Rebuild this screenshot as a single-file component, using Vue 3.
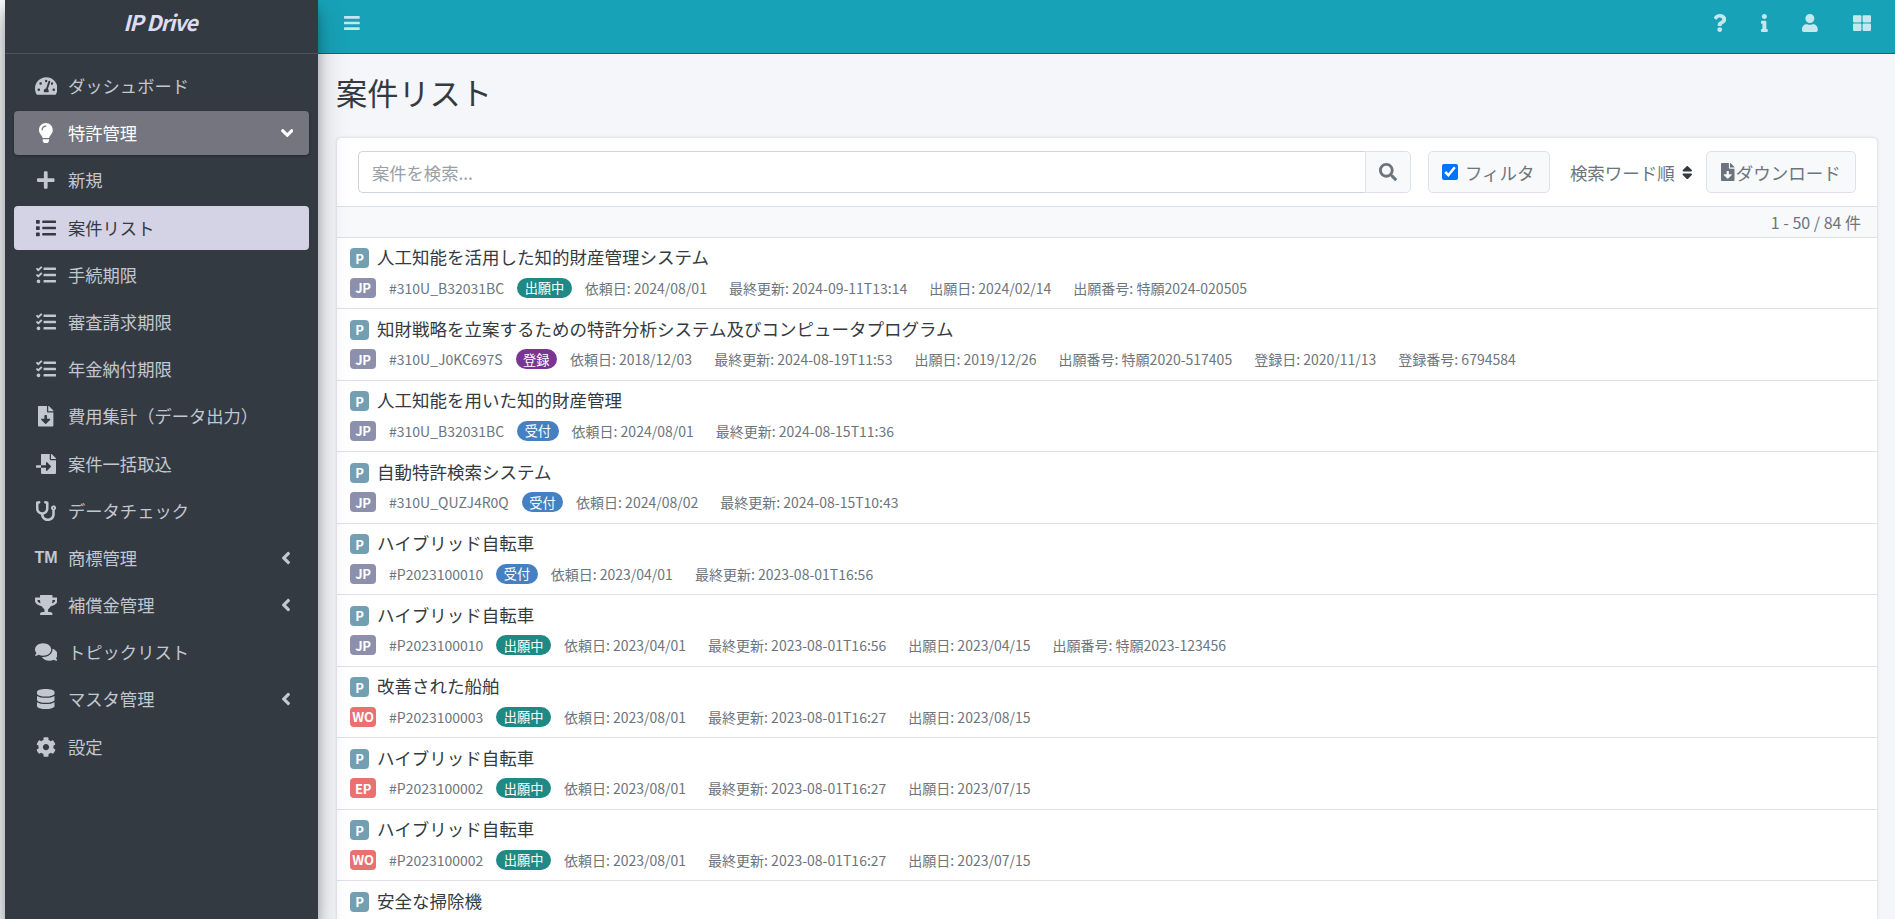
<template>
  <div class="layout">
    <aside class="sidebar">
      <div class="brand">IP Drive</div>
      <nav class="menu">
        <a v-for="item in menuItems" :key="item.label" class="menu-item" :class="item.state">
          <span class="menu-icon">
            <span v-if="item.icon === 'tm'" class="tm">TM</span>
            <svg v-else :viewBox="`0 0 ${icons[item.icon].w} 512`" :style="{ height: (item.size || 20) + 'px' }">
              <path fill="currentColor" :d="icons[item.icon].d" />
            </svg>
          </span>
          <span class="menu-label">{{ item.label }}</span>
          <svg v-if="item.arrow" class="menu-arrow" :class="item.arrow" :viewBox="`0 0 ${icons[item.arrow].w} 512`">
            <path fill="currentColor" :d="icons[item.arrow].d" />
          </svg>
        </a>
      </nav>
    </aside>

    <div class="content-wrap">
      <header class="topbar">
        <a class="nav-link menu-toggle">
          <svg :viewBox="`0 0 ${icons.bars.w} 512`"><path fill="currentColor" :d="icons.bars.d" /></svg>
        </a>
        <div class="nav-right">
          <a v-for="name in topIcons" :key="name" class="nav-link">
            <svg :viewBox="`0 0 ${icons[name].w} 512`"><path fill="currentColor" :d="icons[name].d" /></svg>
          </a>
        </div>
      </header>

      <main class="main">
        <h1 class="page-title">案件リスト</h1>

        <section class="card">
          <div class="toolbar">
            <div class="search-group">
              <input class="search-input" type="text" placeholder="案件を検索..." />
              <button class="search-button">
                <svg viewBox="0 0 512 512"><path fill="currentColor" :d="icons.search.d" /></svg>
              </button>
            </div>
            <label class="filter-button">
              <input type="checkbox" checked />
              <span>フィルタ</span>
            </label>
            <div class="sort-label">
              検索ワード順
              <svg viewBox="0 0 320 512"><path fill="currentColor" :d="icons.sort.d" /></svg>
            </div>
            <button class="download-button">
              <svg viewBox="0 0 384 512"><path fill="currentColor" :d="icons.fileDownload.d" /></svg>
              ダウンロード
            </button>
          </div>

          <div class="count-line">1 - 50 / 84 件</div>

          <ul class="case-list">
            <li v-for="(row, index) in rows" :key="index" class="case-row">
              <div class="case-title">
                <span class="badge-p">P</span>
                <span>{{ row.title }}</span>
              </div>
              <div v-if="row.id" class="case-meta">
                <span class="badge-country" :class="row.country === 'JP' ? 'jp' : 'foreign'">{{ row.country }}</span>
                <span class="case-id">{{ row.id }}</span>
                <span class="pill" :class="statusClass[row.status]">{{ row.status }}</span>
                <span v-for="field in row.fields" :key="field" class="meta-field">{{ field }}</span>
              </div>
            </li>
          </ul>
        </section>
      </main>
    </div>
  </div>
</template>

<script setup>
const icons = {
  bars: { w: 448, d: 'M16 132h416c8.837 0 16-7.163 16-16V76c0-8.837-7.163-16-16-16H16C7.163 60 0 67.163 0 76v40c0 8.837 7.163 16 16 16zm0 160h416c8.837 0 16-7.163 16-16v-40c0-8.837-7.163-16-16-16H16c-8.837 0-16 7.163-16 16v40c0 8.837 7.163 16 16 16zm0 160h416c8.837 0 16-7.163 16-16v-40c0-8.837-7.163-16-16-16H16c-8.837 0-16 7.163-16 16v40c0 8.837 7.163 16 16 16z' },
  search: { w: 512, d: 'M505 442.7L405.3 343c-4.5-4.5-10.6-7-17-7H372c27.6-35.3 44-79.7 44-128C416 93.1 322.9 0 208 0S0 93.1 0 208s93.1 208 208 208c48.3 0 92.7-16.4 128-44v16.3c0 6.4 2.5 12.5 7 17l99.7 99.7c9.4 9.4 24.6 9.4 33.9 0l28.3-28.3c9.4-9.4 9.4-24.6.1-34zM208 336c-70.7 0-128-57.2-128-128 0-70.7 57.2-128 128-128 70.7 0 128 57.2 128 128 0 70.7-57.2 128-128 128z' },
  plus: { w: 448, d: 'M416 208H272V64c0-17.67-14.33-32-32-32h-32c-17.67 0-32 14.33-32 32v144H32c-17.67 0-32 14.33-32 32v32c0 17.67 14.33 32 32 32h144v144c0 17.67 14.33 32 32 32h32c17.67 0 32-14.33 32-32V304h144c17.67 0 32-14.33 32-32v-32c0-17.67-14.33-32-32-32z' },
  angleDown: { w: 320, d: 'M143 352.3L7 216.3c-9.4-9.4-9.4-24.6 0-33.9l22.6-22.6c9.4-9.4 24.6-9.4 33.9 0l96.4 96.4 96.4-96.4c9.4-9.4 24.6-9.4 33.9 0l22.6 22.6c9.4 9.4 9.4 24.6 0 33.9l-136 136c-9.2 9.4-24.4 9.4-33.8 0z' },
  angleLeft: { w: 256, d: 'M31.7 239l136-136c9.4-9.4 24.6-9.4 33.9 0l22.6 22.6c9.4 9.4 9.4 24.6 0 33.9L127.9 256l96.4 96.4c9.4 9.4 9.4 24.6 0 33.9L201.7 409c-9.4 9.4-24.6 9.4-33.9 0l-136-136c-9.5-9.4-9.5-24.6-.1-34z' },
  lightbulb: { w: 352, d: 'M96.06 454.35c.01 6.29 1.87 12.45 5.36 17.69l17.09 25.69a31.99 31.99 0 0 0 26.64 14.28h61.71a31.99 31.99 0 0 0 26.64-14.28l17.09-25.69a31.989 31.989 0 0 0 5.36-17.69l.04-38.35H96.01l.05 38.35zM0 176c0 44.37 16.45 84.85 43.56 115.78 16.52 18.85 42.36 58.23 52.21 91.45.04.26.07.52.11.78h160.24c.04-.26.07-.51.11-.78 9.85-33.22 35.69-72.6 52.21-91.45C335.55 260.85 352 220.37 352 176 352 78.61 272.91-.3 175.45 0 73.44.31 0 82.97 0 176zm176-80c-44.11 0-80 35.89-80 80 0 8.84-7.16 16-16 16s-16-7.16-16-16c0-61.76 50.24-112 112-112 8.84 0 16 7.16 16 16s-7.16 16-16 16z' },
  tachometer: { w: 576, d: 'M288 32C128.94 32 0 160.94 0 320c0 52.8 14.25 102.26 39.06 144.8 5.61 9.62 16.3 15.2 27.44 15.2h443c11.14 0 21.83-5.58 27.44-15.2C561.75 422.26 576 372.8 576 320c0-159.06-128.94-288-288-288zm0 64c14.71 0 26.58 10.13 30.32 23.65-1.11 2.26-2.64 4.23-3.45 6.67l-9.22 27.67c-5.13 3.49-10.97 6.01-17.64 6.01-17.67 0-32-14.33-32-32S270.33 96 288 96zM96 384c-17.67 0-32-14.33-32-32s14.33-32 32-32 32 14.33 32 32-14.33 32-32 32zm48-160c-17.67 0-32-14.33-32-32s14.33-32 32-32 32 14.33 32 32-14.33 32-32 32zm246.77-72.41l-61.33 184C343.13 347.33 352 364.54 352 384c0 11.72-3.38 22.55-8.88 32H232.88c-5.5-9.45-8.88-20.28-8.88-32 0-33.94 26.5-61.43 59.9-63.59l61.34-184.01c4.17-12.56 17.73-19.45 30.36-15.17 12.57 4.19 19.35 17.79 15.17 30.36zm14.66 57.2l15.52-46.55c3.47-1.29 7.13-2.23 11.05-2.23 17.67 0 32 14.33 32 32s-14.33 32-32 32c-11.38-.01-20.89-6.28-26.57-15.22zM480 384c-17.67 0-32-14.33-32-32s14.33-32 32-32 32 14.33 32 32-14.33 32-32 32z' },
  list: { w: 512, d: 'M80 368H16a16 16 0 0 0-16 16v64a16 16 0 0 0 16 16h64a16 16 0 0 0 16-16v-64a16 16 0 0 0-16-16zm0-320H16A16 16 0 0 0 0 64v64a16 16 0 0 0 16 16h64a16 16 0 0 0 16-16V64a16 16 0 0 0-16-16zm0 160H16a16 16 0 0 0-16 16v64a16 16 0 0 0 16 16h64a16 16 0 0 0 16-16v-64a16 16 0 0 0-16-16zm416 176H176a16 16 0 0 0-16 16v32a16 16 0 0 0 16 16h320a16 16 0 0 0 16-16v-32a16 16 0 0 0-16-16zm0-320H176a16 16 0 0 0-16 16v32a16 16 0 0 0 16 16h320a16 16 0 0 0 16-16V80a16 16 0 0 0-16-16zm0 160H176a16 16 0 0 0-16 16v32a16 16 0 0 0 16 16h320a16 16 0 0 0 16-16v-32a16 16 0 0 0-16-16z' },
  tasks: { w: 512, d: 'M139.61 35.5a12 12 0 0 0-17 0L58.93 98.81l-22.7-22.12a12 12 0 0 0-17 0L3.53 92.41a12 12 0 0 0 0 17l47.59 47.4a12.78 12.78 0 0 0 17.61 0l15.59-15.62L156.52 69a12.09 12.09 0 0 0 .09-17zm0 159.19a12 12 0 0 0-17 0l-63.68 63.72-22.7-22.1a12 12 0 0 0-17 0L3.53 252a12 12 0 0 0 0 17L51 316.5a12.77 12.77 0 0 0 17.6 0l15.7-15.69 72.2-72.22a12 12 0 0 0 .09-16.9zM64 368c-26.49 0-48.59 21.5-48.59 48S37.53 464 64 464a48 48 0 0 0 0-96zm432 16H208a16 16 0 0 0-16 16v32a16 16 0 0 0 16 16h288a16 16 0 0 0 16-16v-32a16 16 0 0 0-16-16zm0-320H208a16 16 0 0 0-16 16v32a16 16 0 0 0 16 16h288a16 16 0 0 0 16-16V80a16 16 0 0 0-16-16zm0 160H208a16 16 0 0 0-16 16v32a16 16 0 0 0 16 16h288a16 16 0 0 0 16-16v-32a16 16 0 0 0-16-16z' },
  fileDownload: { w: 384, d: 'M224 136V0H24C10.7 0 0 10.7 0 24v464c0 13.3 10.7 24 24 24h336c13.3 0 24-10.7 24-24V160H248c-13.2 0-24-10.8-24-24zm76.45 211.36l-96.42 95.7c-6.65 6.61-17.39 6.61-24.04 0l-96.42-95.7C73.42 337.29 80.54 320 94.82 320H160v-80c0-8.84 7.16-16 16-16h32c8.84 0 16 7.16 16 16v80h65.18c14.28 0 21.4 17.29 11.27 27.36zM377 105L279.1 7c-4.5-4.5-10.6-7-17-7H256v128h128v-6.1c0-6.3-2.5-12.4-7-16.9z' },
  fileImport: { w: 512, d: 'M16 288c-8.8 0-16 7.2-16 16v32c0 8.8 7.2 16 16 16h112v-64zm489-183L407.1 7c-4.5-4.5-10.6-7-17-7H384v128h128v-6.1c0-6.3-2.5-12.4-7-16.9zm-153 31V0H152c-13.3 0-24 10.7-24 24v264h128v-65.2c0-14.3 17.3-21.4 27.4-11.3L379 308c6.6 6.7 6.6 17.4 0 24l-95.7 96.4c-10.1 10.1-27.4 3-27.4-11.3V352H128v136c0 13.3 10.7 24 24 24h336c13.3 0 24-10.7 24-24V160H376c-13.2 0-24-10.8-24-24z' },
  stethoscope: { w: 512, d: 'M447.1 112c-34.2.5-62.3 28.4-63 62.6-.5 24.3 12.5 45.6 32 56.8V344c0 57.3-50.2 104-112 104-60 0-109.2-44.1-111.9-99.2C265 333.8 320 269.2 320 192V36.6c0-11.4-8.1-21.3-19.3-23.5L237.8.5c-13-2.6-25.6 5.8-28.2 18.8L206.4 35c-2.6 13 5.8 25.6 18.8 28.2l30.7 6.1v121.4c0 52.9-42.2 96.7-95.1 97.2-53.4.5-96.9-42.7-96.9-96V69.4l30.7-6.1c13-2.6 21.4-15.2 18.8-28.2l-3.1-15.7C107.7 6.4 95.1-2 82.1.6L19.3 13C8.1 15.3 0 25.1 0 36.6V192c0 77.3 55.1 142 128.1 156.8C130.7 439.2 208.6 512 304 512c97 0 176-75.4 176-168V231.4c19.1-11.1 32-31.7 32-55.4 0-35.7-29.2-64.5-64.9-64zm.9 80c-8.8 0-16-7.2-16-16s7.2-16 16-16 16 7.2 16 16-7.2 16-16 16z' },
  trophy: { w: 576, d: 'M552 64H448V24c0-13.3-10.7-24-24-24H152c-13.3 0-24 10.7-24 24v40H24C10.7 64 0 74.7 0 88v56c0 35.7 22.5 72.4 61.9 100.7 31.5 22.7 69.8 37.1 110 41.7C203.3 338.5 240 360 240 360v72h-48c-35.3 0-64 20.7-64 56v12c0 6.6 5.4 12 12 12h296c6.6 0 12-5.4 12-12v-12c0-35.3-28.7-56-64-56h-48v-72s36.7-21.5 68.1-73.6c40.3-4.6 78.6-19 110-41.7 39.3-28.3 61.9-65 61.9-100.7V88c0-13.3-10.7-24-24-24zM99.3 192.8C74.9 175.2 64 155.6 64 144v-16h64.2c1 32.6 5.8 61.2 12.8 86.2-15.1-5.2-29.2-12.4-41.7-21.4zM512 144c0 16.1-17.7 36.1-35.3 48.8-12.5 9-26.7 16.2-41.8 21.4 7-25 11.8-53.6 12.8-86.2H512v16z' },
  comments: { w: 576, d: 'M416 192c0-88.4-93.1-160-208-160S0 103.6 0 192c0 34.3 14.1 65.9 38 92-13.4 30.2-35.5 54.2-35.8 54.5-2.2 2.3-2.8 5.7-1.5 8.7S4.8 352 8 352c36.6 0 66.9-12.3 88.7-25 32.2 15.7 70.3 25 111.3 25 114.9 0 208-71.6 208-160zm122 220c23.9-26 38-57.7 38-92 0-66.9-53.5-124.2-129.3-148.1.9 6.6 1.3 13.3 1.3 20.1 0 105.9-107.7 192-240 192-10.8 0-21.3-.8-31.7-1.9C207.8 439.6 281.8 480 368 480c41 0 79.1-9.2 111.3-25 21.8 12.7 52.1 25 88.7 25 3.2 0 6.1-1.9 7.3-4.8 1.3-2.9.7-6.3-1.5-8.7-.3-.3-22.4-24.2-35.8-54.5z' },
  database: { w: 448, d: 'M448 73.143v45.714C448 159.143 347.667 192 224 192S0 159.143 0 118.857V73.143C0 32.857 100.333 0 224 0s224 32.857 224 73.143zM448 176v102.857C448 319.143 347.667 352 224 352S0 319.143 0 278.857V176c48.125 33.143 136.208 48.572 224 48.572S399.874 209.143 448 176zm0 160v102.857C448 479.143 347.667 512 224 512S0 479.143 0 438.857V336c48.125 33.143 136.208 48.572 224 48.572S399.874 369.143 448 336z' },
  cog: { w: 512, d: 'M487.4 315.7l-42.6-24.6c4.3-23.2 4.3-47 0-70.2l42.6-24.6c4.9-2.8 7.1-8.6 5.5-14-11.1-35.6-30-67.8-54.7-94.6-3.8-4.1-10-5.1-14.8-2.3L380.8 110c-17.9-15.4-38.5-27.3-60.8-35.1V25.8c0-5.6-3.9-10.5-9.4-11.7-36.7-8.2-74.3-7.8-109.2 0-5.5 1.2-9.4 6.1-9.4 11.7V75c-22.2 7.9-42.8 19.8-60.8 35.1L88.7 85.5c-4.9-2.8-11-1.9-14.8 2.3-24.7 26.7-43.6 58.9-54.7 94.6-1.7 5.4.6 11.2 5.5 14L67.3 221c-4.3 23.2-4.3 47 0 70.2l-42.6 24.6c-4.9 2.8-7.1 8.6-5.5 14 11.1 35.6 30 67.8 54.7 94.6 3.8 4.1 10 5.1 14.8 2.3l42.6-24.6c17.9 15.4 38.5 27.3 60.8 35.1v49.2c0 5.6 3.9 10.5 9.4 11.7 36.7 8.2 74.3 7.8 109.2 0 5.5-1.2 9.4-6.1 9.4-11.7v-49.2c22.2-7.9 42.8-19.8 60.8-35.1l42.6 24.6c4.9 2.8 11 1.9 14.8-2.3 24.7-26.7 43.6-58.9 54.7-94.6 1.5-5.5-.7-11.3-5.6-14.1zM256 336c-44.1 0-80-35.9-80-80s35.9-80 80-80 80 35.9 80 80-35.9 80-80 80z' },
  question: { w: 384, d: 'M202.021 0C122.202 0 70.503 32.703 29.914 91.026c-7.363 10.58-5.093 25.086 5.178 32.874l43.138 32.709c10.373 7.865 25.132 6.026 33.253-4.148 25.049-31.381 43.63-49.449 82.757-49.449 30.764 0 68.816 19.799 68.816 49.631 0 22.552-18.617 34.134-48.993 51.164-35.423 19.86-82.299 44.576-82.299 106.405V320c0 13.255 10.745 24 24 24h72.471c13.255 0 24-10.745 24-24v-5.773c0-42.86 125.268-44.645 125.268-160.627C377.504 66.256 286.902 0 202.021 0zM192 373.459c-38.196 0-69.271 31.075-69.271 69.271 0 38.195 31.075 69.27 69.271 69.27s69.271-31.075 69.271-69.271-31.075-69.27-69.271-69.27z' },
  info: { w: 192, d: 'M20 424.229h20V279.771H20c-11.046 0-20-8.954-20-20V212c0-11.046 8.954-20 20-20h112c11.046 0 20 8.954 20 20v212.229h20c11.046 0 20 8.954 20 20V492c0 11.046-8.954 20-20 20H20c-11.046 0-20-8.954-20-20v-47.771c0-11.046 8.954-20 20-20zM96 0C56.235 0 24 32.235 24 72s32.235 72 72 72 72-32.235 72-72S135.764 0 96 0z' },
  user: { w: 448, d: 'M224 256c70.7 0 128-57.3 128-128S294.7 0 224 0 96 57.3 96 128s57.3 128 128 128zm89.6 32h-16.7c-22.2 10.2-46.9 16-72.9 16s-50.6-5.8-72.9-16h-16.7C60.2 288 0 348.2 0 422.4V464c0 26.5 21.5 48 48 48h352c26.5 0 48-21.5 48-48v-41.6c0-74.2-60.2-134.4-134.4-134.4z' },
  thLarge: { w: 512, d: 'M296 32h192c13.255 0 24 10.745 24 24v160c0 13.255-10.745 24-24 24H296c-13.255 0-24-10.745-24-24V56c0-13.255 10.745-24 24-24zm-80 0H24C10.745 32 0 42.745 0 56v160c0 13.255 10.745 24 24 24h192c13.255 0 24-10.745 24-24V56c0-13.255-10.745-24-24-24zM0 296v160c0 13.255 10.745 24 24 24h192c13.255 0 24-10.745 24-24V296c0-13.255-10.745-24-24-24H24c-13.255 0-24 10.745-24 24zm296 184h192c13.255 0 24-10.745 24-24V296c0-13.255-10.745-24-24-24H296c-13.255 0-24 10.745-24 24v160c0 13.255 10.745 24 24 24z' },
  sort: { w: 320, d: 'M41 288h238c21.4 0 32.1 25.9 17 41L177 448c-9.4 9.4-24.6 9.4-33.9 0L24 329c-15.1-15.1-4.4-41 17-41zm255-105L177 64c-9.4-9.4-24.6-9.4-33.9 0L24 183c-15.1 15.1-4.4 41 17 41h238c21.4 0 32.1-25.9 17-41z' }
}

const topIcons = ['question', 'info', 'user', 'thLarge']

const menuItems = [
  { label: 'ダッシュボード', icon: 'tachometer' },
  { label: '特許管理', icon: 'lightbulb', arrow: 'angleDown', state: 'open' },
  { label: '新規', icon: 'plus' },
  { label: '案件リスト', icon: 'list', state: 'active' },
  { label: '手続期限', icon: 'tasks' },
  { label: '審査請求期限', icon: 'tasks' },
  { label: '年金納付期限', icon: 'tasks' },
  { label: '費用集計（データ出力）', icon: 'fileDownload', size: 20.5 },
  { label: '案件一括取込', icon: 'fileImport' },
  { label: 'データチェック', icon: 'stethoscope' },
  { label: '商標管理', icon: 'tm', arrow: 'angleLeft' },
  { label: '補償金管理', icon: 'trophy', arrow: 'angleLeft' },
  { label: 'トピックリスト', icon: 'comments' },
  { label: 'マスタ管理', icon: 'database', arrow: 'angleLeft' },
  { label: '設定', icon: 'cog' }
]

const statusClass = { '出願中': 'filed', '登録': 'registered', '受付': 'received' }

const rows = [
  { title: '人工知能を活用した知的財産管理システム', country: 'JP', id: '#310U_B32031BC', status: '出願中', fields: ['依頼日: 2024/08/01', '最終更新: 2024-09-11T13:14', '出願日: 2024/02/14', '出願番号: 特願2024-020505'] },
  { title: '知財戦略を立案するための特許分析システム及びコンピュータプログラム', country: 'JP', id: '#310U_J0KC697S', status: '登録', fields: ['依頼日: 2018/12/03', '最終更新: 2024-08-19T11:53', '出願日: 2019/12/26', '出願番号: 特願2020-517405', '登録日: 2020/11/13', '登録番号: 6794584'] },
  { title: '人工知能を用いた知的財産管理', country: 'JP', id: '#310U_B32031BC', status: '受付', fields: ['依頼日: 2024/08/01', '最終更新: 2024-08-15T11:36'] },
  { title: '自動特許検索システム', country: 'JP', id: '#310U_QUZJ4R0Q', status: '受付', fields: ['依頼日: 2024/08/02', '最終更新: 2024-08-15T10:43'] },
  { title: 'ハイブリッド自転車', country: 'JP', id: '#P2023100010', status: '受付', fields: ['依頼日: 2023/04/01', '最終更新: 2023-08-01T16:56'] },
  { title: 'ハイブリッド自転車', country: 'JP', id: '#P2023100010', status: '出願中', fields: ['依頼日: 2023/04/01', '最終更新: 2023-08-01T16:56', '出願日: 2023/04/15', '出願番号: 特願2023-123456'] },
  { title: '改善された船舶', country: 'WO', id: '#P2023100003', status: '出願中', fields: ['依頼日: 2023/08/01', '最終更新: 2023-08-01T16:27', '出願日: 2023/08/15'] },
  { title: 'ハイブリッド自転車', country: 'EP', id: '#P2023100002', status: '出願中', fields: ['依頼日: 2023/08/01', '最終更新: 2023-08-01T16:27', '出願日: 2023/07/15'] },
  { title: 'ハイブリッド自転車', country: 'WO', id: '#P2023100002', status: '出願中', fields: ['依頼日: 2023/08/01', '最終更新: 2023-08-01T16:27', '出願日: 2023/07/15'] },
  { title: '安全な掃除機' }
]
</script>

<style>
html, body {
  margin: 0;
  height: 100%;
  overflow: hidden;
  background: #f4f6f9;
}
</style>

<style scoped>
.layout {
  display: flex;
  height: 100vh;
  padding-left: 5px;
  overflow: hidden;
  box-sizing: border-box;
  font-family: "Noto Sans CJK JP", "Noto Sans", sans-serif;
  font-size: 17.3px;
  color: #343a40;
}

.sidebar {
  flex: 0 0 313px;
  background: #343a42;
  box-shadow: 0 14px 28px rgba(0, 0, 0, 0.25), 0 10px 10px rgba(0, 0, 0, 0.22);
  position: relative;
  z-index: 2;
}

.brand {
  height: 54px;
  box-sizing: border-box;
  border-bottom: 1px solid #4b545c;
  padding: 0 3px 10px 0;
  display: flex;
  align-items: center;
  justify-content: center;
  font-size: 21.5px;
  font-style: italic;
  font-weight: 700;
  letter-spacing: -1.1px;
  color: #dcdcf5;
}

.menu {
  padding: 10px 9px 0;
}

.menu-item {
  display: flex;
  align-items: center;
  height: 44px;
  margin-bottom: 3.2px;
  border-radius: 4px;
  color: #c2c7d0;
  padding-left: 18px;
  padding-right: 16px;
}

.menu-item.open {
  background: #74757f;
  color: #fff;
  box-shadow: 0 1px 3px rgba(0, 0, 0, 0.3);
}

.menu-item.active {
  background: #d4d3e6;
  color: #343a40;
}

.menu-icon {
  width: 28px;
  margin-right: 8px;
  display: flex;
  justify-content: center;
  align-items: center;
}

.menu-icon svg {
  display: block;
}

.tm {
  font-family: "Liberation Sans", sans-serif;
  font-weight: 700;
  font-size: 16px;
}

.menu-label {
  flex: 1;
  padding-bottom: 1px;
}

.menu-arrow {
  height: 20px;
  display: block;
}

.menu-arrow.angleLeft {
  margin-right: 2px;
}

.content-wrap {
  flex: 1;
  min-width: 0;
  display: flex;
  flex-direction: column;
}

.topbar {
  height: 54px;
  flex: none;
  box-sizing: border-box;
  background: #17a2b8;
  border-bottom: 1px solid #2c5d66;
  padding-bottom: 8px;
  display: flex;
  align-items: center;
  justify-content: space-between;
}

.nav-right {
  display: flex;
  align-items: center;
  padding-right: 7px;
}

.nav-link {
  display: flex;
  align-items: center;
  padding: 0 17.3px;
  color: rgba(255, 255, 255, 0.75);
}

.menu-toggle {
  margin-left: 9px;
}

.nav-link svg {
  height: 18px;
  display: block;
}

.main {
  flex: 1;
  padding: 0 17px 0 18px;
}

.page-title {
  margin: 0;
  height: 83px;
  padding-bottom: 9px;
  box-sizing: border-box;
  display: flex;
  align-items: center;
  font-size: 31.2px;
  font-weight: 400;
  color: #343a40;
}

.card {
  background: #fff;
  border: 1px solid #e3e6ea;
  border-radius: 5px 5px 0 0;
  box-shadow: 0 0 3px rgba(0, 0, 0, 0.08);
}

.toolbar {
  height: 69px;
  box-sizing: border-box;
  display: flex;
  align-items: center;
  padding: 0 21px 0 21px;
  border-bottom: 1px solid #dee2e6;
}

.search-group {
  flex: 1;
  display: flex;
  height: 42px;
  margin-right: 17px;
}

.search-input {
  flex: 1;
  min-width: 0;
  box-sizing: border-box;
  border: 1px solid #ced4da;
  border-right: none;
  border-radius: 5px 0 0 5px;
  padding: 0 13px;
  font: inherit;
  color: #495057;
  outline: none;
}

.search-input::placeholder {
  color: #9aa0a6;
}

.search-button {
  width: 46px;
  border: 1px solid #dee2e6;
  border-radius: 0 5px 5px 0;
  background: #f8f9fa;
  color: #6c757d;
  display: flex;
  align-items: center;
  justify-content: center;
  padding: 0;
}

.search-button svg {
  height: 18px;
}

.filter-button {
  width: 122px;
  height: 42px;
  box-sizing: border-box;
  border: 1px solid #dee2e6;
  border-radius: 5px;
  background: #f8f9fa;
  color: #6c757d;
  font-size: 17.5px;
  display: flex;
  align-items: center;
  padding-left: 13px;
  gap: 7px;
}

.filter-button input {
  width: 16px;
  height: 16px;
  margin: 0;
  accent-color: #0075ff;
}

.sort-label {
  margin-left: 20px;
  display: flex;
  align-items: center;
  gap: 7px;
  font-size: 17.5px;
  color: #6c757d;
  white-space: nowrap;
}

.sort-label svg {
  height: 17px;
  color: #343a40;
}

.download-button {
  margin-left: 13.5px;
  width: 150px;
  height: 42px;
  box-sizing: border-box;
  border: 1px solid #dee2e6;
  border-radius: 5px;
  background: #f8f9fa;
  color: #6c757d;
  font: inherit;
  font-size: 17.5px;
  display: flex;
  align-items: center;
  justify-content: center;
  gap: 1px;
  padding: 0;
  white-space: nowrap;
}

.download-button svg {
  height: 18px;
}

.count-line {
  height: 30.5px;
  box-sizing: border-box;
  background: #f8f9fa;
  border-bottom: 1px solid #dee2e6;
  display: flex;
  align-items: center;
  justify-content: flex-end;
  padding-right: 16px;
  font-size: 16px;
  color: #6c757d;
}

.case-list {
  list-style: none;
  margin: 0;
  padding: 0;
}

.case-row {
  height: 71.5px;
  box-sizing: border-box;
  border-bottom: 1px solid #dee2e6;
  padding: 8px 13px 0;
}

.case-title {
  display: flex;
  align-items: center;
  gap: 8px;
  height: 22px;
  font-size: 17.5px;
  font-weight: 400;
}

.badge-p {
  width: 19px;
  height: 20px;
  border-radius: 4px;
  background: #72a0b2;
  color: #fff;
  font-size: 13px;
  font-weight: 700;
  display: flex;
  align-items: center;
  justify-content: center;
  flex: none;
  margin-top: 3px;
}

.case-meta {
  display: flex;
  align-items: center;
  margin-top: 10px;
  height: 20px;
  font-size: 14px;
  color: #6c757d;
  white-space: nowrap;
}

.badge-country {
  width: 26px;
  height: 20px;
  border-radius: 4px;
  color: #fff;
  font-size: 13px;
  font-weight: 700;
  letter-spacing: -0.3px;
  display: flex;
  align-items: center;
  justify-content: center;
  flex: none;
}

.badge-country.jp {
  background: #8d90ad;
}

.badge-country.foreign {
  background: #e9716f;
}

.case-id {
  margin-left: 13px;
  margin-right: 13px;
}

.pill {
  height: 20px;
  padding: 0 7.5px;
  border-radius: 10px;
  color: #fff;
  font-size: 13.2px;
  display: flex;
  align-items: center;
  margin-right: 13px;
}

.pill.filed {
  background: #1f8a85;
}

.pill.registered {
  background: #7a3593;
}

.pill.received {
  background: #4480c2;
}

.meta-field {
  margin-right: 22px;
}
</style>
